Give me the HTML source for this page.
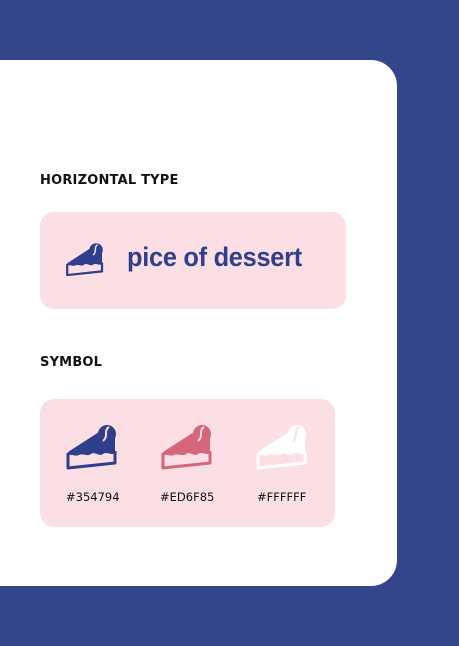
<!DOCTYPE html>
<html><head><style>
body{margin:0;width:459px;height:646px;background:#33468b;position:relative;overflow:hidden;font-family:"DejaVu Sans","Liberation Sans",sans-serif}
.card{position:absolute;left:0;top:60px;width:397px;height:526px;background:#fff;border-radius:0 26px 26px 0}
h2{position:absolute;margin:0;font-size:13px;font-weight:bold;color:#111;letter-spacing:.2px}
.box{position:absolute;background:#fbdfe4;border-radius:14px}
.t{position:absolute;font-family:"Liberation Sans",sans-serif;font-size:27px;color:#2f3f8c;font-weight:bold;letter-spacing:-0.3px;transform:scaleX(0.94);transform-origin:left}
.hex{position:absolute;font-size:11.5px;color:#111;top:490px;font-weight:500}
svg{position:absolute}
</style></head><body>
<div class="card"></div>
<h2 style="left:40px;top:173px">HORIZONTAL TYPE</h2>
<div class="box" style="left:40px;top:212px;width:306px;height:97px"></div>
<h2 style="left:40px;top:355px">SYMBOL</h2>
<div class="box" style="left:40px;top:399px;width:295px;height:128px"></div>
<svg width="0" height="0"><defs>
<g id="cake">
<path d="M3 29 L34 9 L50 14 L50 30 C46 33 42 28 38 31 C34 34 30 28 26 31 C22 34 18 30 14 32 C10 34 6 30 3 33 Z" fill="currentColor"/>
<path d="M3 30 L3 45 L50 40 L50 28" fill="none" stroke="currentColor" stroke-width="3" stroke-linejoin="round"/>
<circle cx="42" cy="11" r="9" fill="currentColor"/>
<path d="M44 4 C38 8 44 13 38 18" stroke="#fbdfe4" stroke-width="2" fill="none"/>
</g></defs></svg>
<svg style="left:65px;top:241px" width="40" height="37" viewBox="0 0 54 48" color="#2f3f8c"><use href="#cake"/></svg>
<div class="t" style="left:127px;top:242px">pice of dessert</div>
<svg style="left:65px;top:423px" width="54" height="48" viewBox="0 0 54 48" color="#2f3f8c"><use href="#cake"/></svg>
<svg style="left:160px;top:423px" width="54" height="48" viewBox="0 0 54 48" color="#d6667c"><use href="#cake"/></svg>
<svg style="left:255px;top:423px" width="54" height="48" viewBox="0 0 54 48" color="#ffffff"><use href="#cake"/></svg>
<div class="hex" style="left:66px">#354794</div>
<div class="hex" style="left:160px">#ED6F85</div>
<div class="hex" style="left:257px">#FFFFFF</div>
</body></html>
